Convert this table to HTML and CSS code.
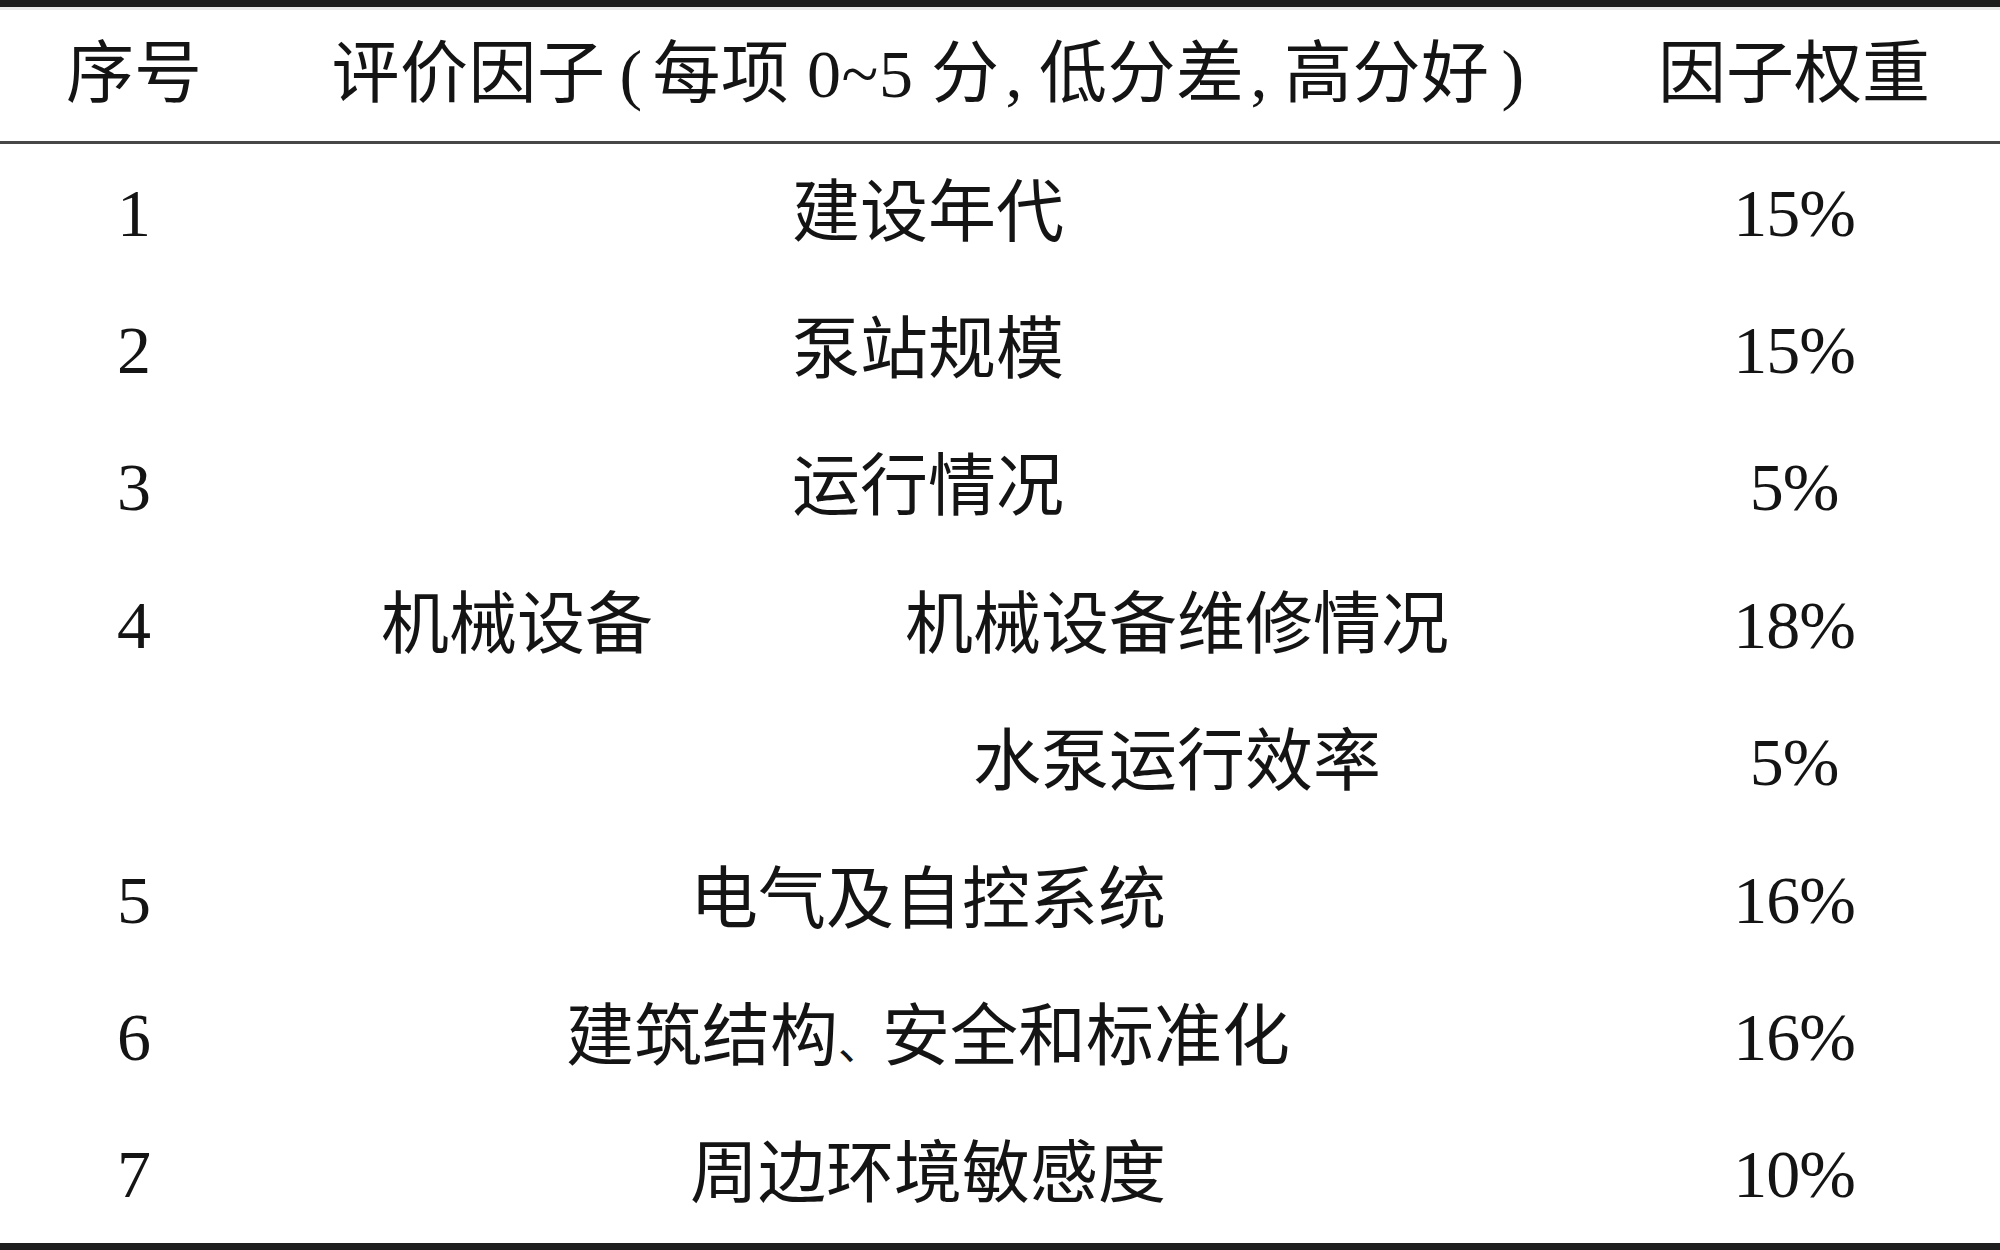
FILE: index.html
```html
<!DOCTYPE html>
<html lang="zh-CN">
<head>
<meta charset="utf-8">
<title>泵站评价因子</title>
<link rel="stylesheet" href="styles.css">
</head>
<body>
<div class="table">
  <div class="row head">
    <div class="cell">序号</div>
    <div class="cell mid">评价因子<span class="pl">(</span>每项 0~5 分<span class="pc">,</span>低分差<span class="pc">,</span>高分好<span class="pr">)</span></div>
    <div class="cell">因子权重</div>
  </div>
  <div class="row">
    <div class="cell">1</div>
    <div class="cell mid">建设年代</div>
    <div class="cell pct">15%</div>
  </div>
  <div class="row">
    <div class="cell">2</div>
    <div class="cell mid">泵站规模</div>
    <div class="cell pct">15%</div>
  </div>
  <div class="row">
    <div class="cell">3</div>
    <div class="cell mid">运行情况</div>
    <div class="cell pct">5%</div>
  </div>
  <div class="row">
    <div class="cell">4</div>
    <div class="cell">机械设备</div>
    <div class="cell">机械设备维修情况</div>
    <div class="cell pct">18%</div>
  </div>
  <div class="row">
    <div class="cell"></div>
    <div class="cell"></div>
    <div class="cell">水泵运行效率</div>
    <div class="cell pct">5%</div>
  </div>
  <div class="row">
    <div class="cell">5</div>
    <div class="cell mid">电气及自控系统</div>
    <div class="cell pct">16%</div>
  </div>
  <div class="row">
    <div class="cell">6</div>
    <div class="cell mid">建筑结构<span class="dun">、</span>安全和标准化</div>
    <div class="cell pct">16%</div>
  </div>
  <div class="row">
    <div class="cell">7</div>
    <div class="cell mid">周边环境敏感度</div>
    <div class="cell pct">10%</div>
  </div>
</div>
</body>
</html>
```

FILE: styles.css
```css
html, body {
  margin: 0;
  padding: 0;
  background: #ffffff;
}

body {
  width: 2000px;
  height: 1250px;
  overflow: hidden;
  font-family: "Liberation Serif", "Noto Sans CJK SC", serif;
  font-size: 68px;
  color: #141414;
}

.table {
  width: 2000px;
  border-top: 7px solid #1e1e1e;
  border-bottom: 7px solid #1e1e1e;
  box-sizing: border-box;
  height: 1250px;
  display: flex;
  flex-direction: column;
}

.row {
  display: grid;
  grid-template-columns: 268px 498px 822px 412px;
  height: 137.375px;
  align-items: center;
}

.row.head {
  height: 134px;
  border-bottom: 3px solid #474747;
  box-shadow: inset 0 3px 0 #ececec;
}

.cell {
  text-align: center;
  white-space: nowrap;
  line-height: 1;
}

.mid {
  grid-column: span 2;
}

.head .mid {
  letter-spacing: 0.5px;
}

.pl {
  margin: 0 10px 0 14px;
}

.pc {
  margin: 0 16px 0 6px;
}

.pr {
  margin: 0 0 0 12px;
}

.dun {
  font-size: 44px;
  line-height: 1;
}

.pct {
  letter-spacing: -1px;
}
```
